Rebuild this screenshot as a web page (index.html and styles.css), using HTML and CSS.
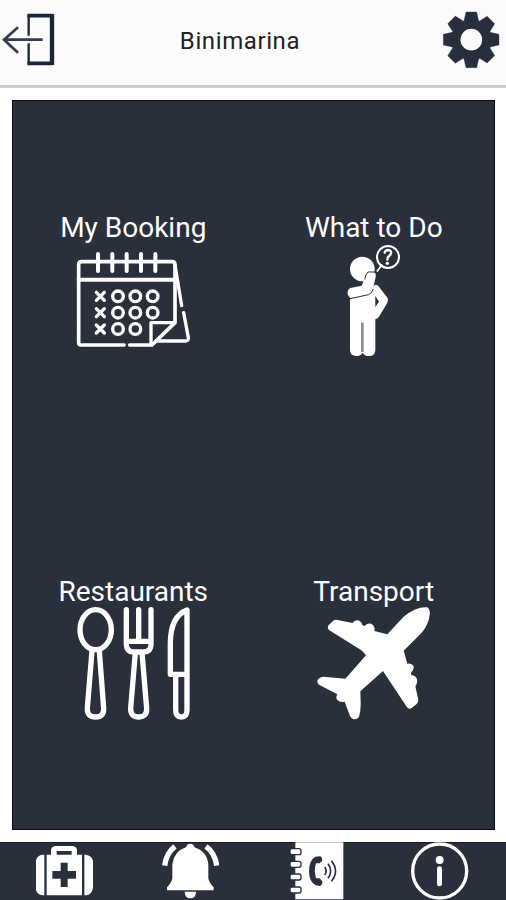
FILE: index.html
```html
<!DOCTYPE html>
<html lang="en">

<head>
    <meta charset="UTF-8">
    <meta name="viewport" content="width=device-width, initial-scale=1.0">
    <title>Binimarina</title>
    <link rel="stylesheet" href="styles.css">
</head>

<body>
    <header class="topbar">
        <svg class="top-icon" viewBox="0 33 174 174">
            <path class="door" d="M86 107V47M86 130V191" stroke-width="7" />
            <path class="door" d="M82 47H158M82 190H158" stroke-width="11" />
            <path class="door" d="M156 42V195" stroke-width="13" />
            <path class="arrow" d="M128 119H12M54 82L12 119L54 158" />
        </svg>
        <h1>Binimarina</h1>
        <svg class="top-icon" viewBox="567 33 174 174">
            <g class="gear">
                <circle cx="655" cy="119" r="47" fill="none" stroke-width="29" />
                <path d="M633 62L639 36H671L677 62ZM633 177L639 203H671L677 177Z" />
                <path d="M633 62L639 36H671L677 62ZM633 177L639 203H671L677 177Z" transform="rotate(45 655 119)" />
                <path d="M633 62L639 36H671L677 62ZM633 177L639 203H671L677 177Z" transform="rotate(90 655 119)" />
                <path d="M633 62L639 36H671L677 62ZM633 177L639 203H671L677 177Z" transform="rotate(135 655 119)" />
            </g>
        </svg>
    </header>

    <main class="menu">
        <div class="tile">
            <h2>My Booking</h2>
            <svg class="tile-icon line" viewBox="78 126 342 342">
                <path d="M222 435H94Q86 435 86 427V194Q86 185 95 185H366Q375 185 375 194V368L306 435H239" stroke-width="11" />
                <path d="M86 239H375M144 162V213M187 162V213M230 162V213M273 162V213M316 162V213" stroke-width="12" />
                <path d="M375 195L395 317M401 338L415 413Q416 423 406 423H318M303 432V368H372" stroke-width="10" />
                <path d="M139 277L163 301M163 277L139 301M139 326L163 350M163 326L139 350M139 375L163 399M163 375L139 399" stroke-width="10" />
                <g stroke-width="10">
                    <circle cx="204" cy="289" r="16" />
                    <circle cx="256" cy="289" r="16" />
                    <circle cx="308" cy="289" r="16" />
                    <circle cx="204" cy="338" r="16" />
                    <circle cx="256" cy="338" r="16" />
                    <circle cx="308" cy="338" r="16" />
                    <circle cx="204" cy="387" r="16" />
                    <circle cx="256" cy="387" r="16" />
                </g>
            </svg>
        </div>

        <div class="tile">
            <h2>What to Do</h2>
            <svg class="tile-icon" viewBox="81 126 342 342">
                <circle cx="217" cy="207" r="37" fill="#fff" />
                <path d="M180 292L245 270Q254 246 265 258L293 294Q296 301 292 308L267 350Q263 357 256 357V452Q254 468 237 468Q222 468 218 458Q213 468 197 468Q180 466 180 450Z" fill="#fff" />
                <path d="M256 288L267 305L256 321Z" class="dark" />
                <path d="M217 368V456" class="cut" stroke-width="8" stroke-opacity=".55" />
                <path d="M238 218Q247 211 256 220Q258 224 257 231L248 269Q246 277 237 281L188 295Q177 295 173 283Q171 269 181 264L215 257L227 227Q230 220 238 218Z" fill="#fff" />
                <path d="M254 216H234Q227 222 224 238M180 296L236 284Q247 279 250 267" class="cut" stroke-width="3" />
                <g class="line">
                    <circle cx="294" cy="171" r="33" stroke-width="6" />
                    <path d="M275 195L262 213" stroke-width="5" />
                    <path d="M284 158Q286 150 294 150Q305 151 303 160Q302 165 297 168Q292 172 292 179" stroke-width="7" />
                </g>
                <circle cx="292" cy="190" r="5" fill="#fff" />
            </svg>
        </div>

        <div class="tile">
            <h2>Restaurants</h2>
            <svg class="tile-icon line" viewBox="78 108 342 342">
                <g stroke-width="16">
                    <ellipse cx="137" cy="179" rx="47" ry="60" />
                    <path d="M126 243L112 415Q111 441 137 441Q162 441 161 415L148 243" />
                    <path d="M229 119V224Q230 246 250 246H281Q302 246 303 224V119M229 214H303M266 119V214" />
                    <path d="M256 248L242 415Q241 441 267 441Q291 441 290 415L276 248" />
                    <path d="M411 120V420Q411 441 394 441Q377 441 377 420V313H361V218Q362 139 411 120ZM377 313H411" />
                </g>
            </svg>
        </div>

        <div class="tile">
            <h2>Transport</h2>
            <svg class="tile-icon" viewBox="51 108 342 342">
                <path class="plane" d="M262 193L311 140Q350 109 382 112Q392 118 389 134Q386 163 365 188L311 242L322 281Q335 278 341 289Q343 298 333 308L334 315Q347 316 351 328Q353 339 346 349L355 390Q355 398 350 402L334 415Q326 419 321 412L249 303L181 364L182 396Q183 420 177 440Q170 450 159 447Q153 444 150 438L134 395Q120 398 112 390Q106 383 112 373L57 344Q49 336 54 328Q60 320 70 320L136 326L198 256Q192 247 183 240L88 181Q80 174 86 165L99 153Q105 148 113 150L157 159Q166 147 178 152Q187 157 187 166L194 168Q206 156 218 164Q226 171 223 183Z" />
            </svg>
        </div>
    </main>

    <footer class="bottombar">
        <!-- first aid -->
        <svg class="nav-icon" viewBox="107 96 174 174">
            <path fill="#fff" d="M139 134H152V121Q153 109 165 108H217Q229 109 230 121V134H245V256H139ZM132 134V256H127Q106 253 106 231V158Q107 136 127 134ZM252 134H257Q278 137 278 158V231Q277 253 257 256H252Z" />
            <path class="dark" d="M169 123H214V134H169ZM181 158H202V183H227V206H202V231H181V206H156V183H181Z" />
        </svg>
        <!-- alerts -->
        <svg class="nav-icon" viewBox="483 96 174 174">
            <path fill="#fff" d="M559 111Q560 101 571 101Q582 101 583 112Q621 124 625 163V205Q627 218 641 232V241H501V232Q515 218 517 205V163Q521 124 559 111ZM554 245H588Q588 264 571 265Q555 264 554 245Z" />
            <path class="ring" d="M525 109Q499 129 494 167M618 109Q645 129 650 167" />
        </svg>
        <!-- phone book -->
        <svg class="nav-icon" viewBox="99 96 174 174">
            <path fill="#fff" d="M127 97H271V268H127Z" />
            <g class="rings">
                <rect x="111" y="116" width="33" height="18" rx="6" />
                <rect x="111" y="154" width="33" height="18" rx="6" />
                <rect x="111" y="192" width="33" height="18" rx="6" />
                <rect x="111" y="231" width="33" height="18" rx="6" />
            </g>
            <path class="dark" d="M187 140L202 139Q209 142 207 153L200 160H189Q182 182 189 205H200L208 214Q209 224 201 228L188 226Q168 215 168 183Q168 151 187 140Z" />
            <path class="wave" d="M215 171Q224 183 215 195M225 161Q241 183 225 205M235 152Q260 183 235 214" />
        </svg>
        <!-- info -->
        <svg class="nav-icon" viewBox="475 96 174 174">
            <circle class="line" cx="561" cy="183" r="81" stroke-width="10" />
            <circle cx="561" cy="150" r="12" fill="#fff" />
            <rect x="553" y="169" width="15" height="60" rx="7" fill="#fff" />
        </svg>
    </footer>
</body>

</html>
```
FILE: styles.css
```css
* {
    padding: 0;
    margin: 0;
    box-sizing: border-box;
}

body {
    display: flex;
    flex-direction: column;
    height: 900px;
    background-color: #fff;
    font-family: Roboto, sans-serif;
    overflow: hidden;
}

svg {
    display: block;
}

.topbar {
    display: flex;
    align-items: center;
    height: 88px;
    padding: 0 6px 5px 0;
    background-color: #fbfbfb;
    border-bottom: 3px solid #cbcbcb;
}

.topbar h1 {
    flex: 1;
    margin-right: 20px;
    padding-top: 2px;
    text-align: center;
    font-size: 24px;
    font-weight: 400;
    letter-spacing: 0.6px;
    color: #222;
}

.top-icon {
    width: 58px;
    height: 58px;
}

.door {
    fill: none;
    stroke: #1c2438;
}

.arrow {
    fill: none;
    stroke: #343b4c;
    stroke-width: 8;
}

.gear {
    fill: #282e3c;
    stroke: #282e3c;
}

.menu {
    display: grid;
    grid-template-columns: 1fr 1fr;
    grid-template-rows: 1fr 1fr;
    height: 730px;
    margin: 12px 11px 12px 12px;
    background-color: #2a2f3c;
    border: 1px solid #080a1c;
}

.tile {
    display: flex;
    flex-direction: column;
    align-items: center;
    padding-top: 112px;
}

.tile h2 {
    height: 29px;
    line-height: 29px;
    font-size: 28px;
    font-weight: 400;
    color: #fff;
}

.tile-icon {
    width: 114px;
    height: 114px;
}

.line {
    fill: none;
    stroke: #fff;
    stroke-linecap: round;
    stroke-linejoin: round;
}

.dark {
    fill: #2a2f3c;
}

.cut {
    fill: none;
    stroke: #2a2f3c;
}

.plane {
    fill: #fff;
}

.bottombar {
    display: flex;
    justify-content: space-around;
    height: 58px;
    padding: 0 3px 0 2px;
    background-color: #2a2f3c;
    box-shadow: inset 0 1px 0 #15192c;
}

.nav-icon {
    width: 58px;
    height: 58px;
}

.ring {
    fill: none;
    stroke: #fff;
    stroke-width: 16;
}

.rings {
    fill: #fff;
    stroke: #2a2f3c;
    stroke-width: 4;
}

.wave {
    fill: none;
    stroke: #2a2f3c;
    stroke-width: 5;
}
```
